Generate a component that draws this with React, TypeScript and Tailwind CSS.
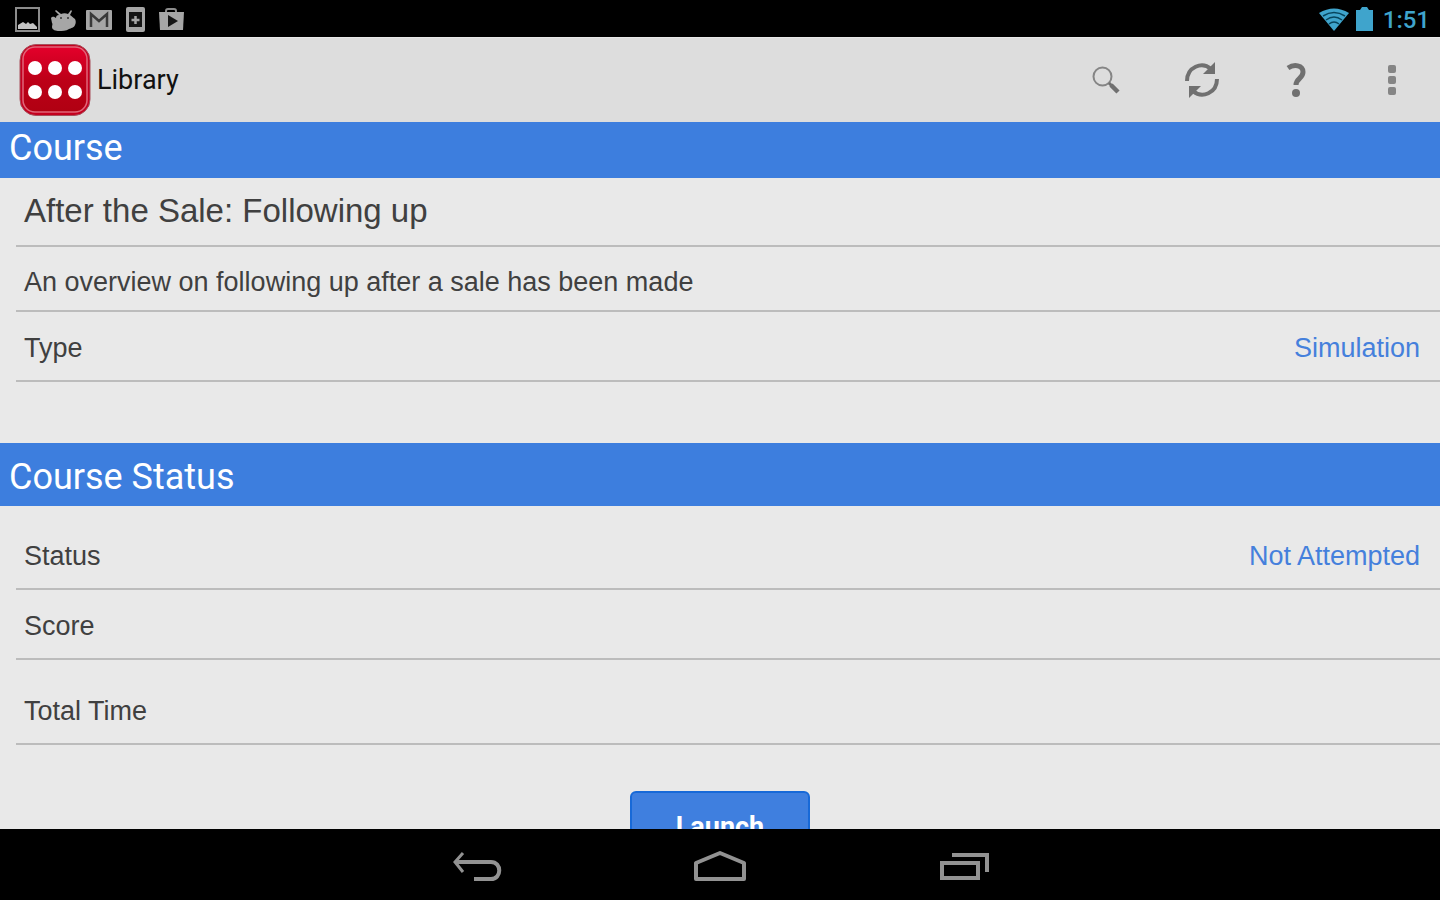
import type { ReactNode } from 'react';

function StatusBar() {
  return (
    <div className="flex h-[37px] shrink-0 items-center justify-between bg-black pl-[14px] pr-[10px] pt-[2px]">
      <div className="flex items-center gap-[10px] text-[#a6a6a6]">
        <svg width="26" height="26" viewBox="0 0 26 26" role="img" aria-label="Screenshot saved">
          <rect x="2" y="1" width="23" height="23" fill="none" stroke="#8c8c8c" strokeWidth="2" />
          <path d="M4 22v-4l5-3 3 2 2-2 2 2 3-1 4 4v2z" fill="#c4c4c4" />
        </svg>
        <svg width="26" height="26" viewBox="0 0 26 26" role="img" aria-label="Android">
          <path d="M1 11c2-2 3-1 5 0 0-2 1-3 3-3L5 4l1-1 5 4c2-1 5-1 7 0l3-4 1 1-2 4c2 1 3 3 5 4 1 2 1 4 0 6-1 3-4 3-6 4-3 2-7 2-10 2-3 0-7-1-7-4 0-2 1-3 0-4z" fill="currentColor" />
          <circle cx="11" cy="11" r="1" fill="#333" />
          <circle cx="18" cy="11" r="1" fill="#333" />
        </svg>
        <svg width="26" height="26" viewBox="0 0 26 26" role="img" aria-label="Mail">
          <rect x="0" y="3" width="26" height="20" rx="1" fill="currentColor" />
          <path d="M5 20V7l8 7 8-7v13" fill="none" stroke="#3a3a3a" strokeWidth="2.500" />
        </svg>
        <svg width="26" height="26" viewBox="0 0 26 26" role="img" aria-label="Device">
          <rect x="4" y="0" width="19" height="25" rx="2" fill="currentColor" />
          <rect x="7" y="5" width="13" height="15" fill="#151515" />
          <path d="M13.500 9v8M9.500 13h8" stroke="currentColor" strokeWidth="2.500" />
        </svg>
        <svg width="26" height="26" viewBox="0 0 26 26" role="img" aria-label="Play Store">
          <path d="M8 6V4q0-2 2-2h6q2 0 2 2v2" fill="none" stroke="#8c8c8c" strokeWidth="2" />
          <path d="M1 5h25l-1 18H2z" fill="currentColor" />
          <path d="M10 8l10 6-10 6z" fill="#151515" />
        </svg>
      </div>
      <div className="flex items-center text-[#3fa4cc]">
        <svg width="32" height="26" viewBox="0 0 32 26" role="img" aria-label="Wi-Fi">
          <path d="M1 6Q16-3 31 6L16 24z" fill="currentColor" />
          <path d="M5 9q11-7 22 0M8 13q8-6 16 0M11 17q5-4 10 0" fill="none" stroke="#07445c" strokeWidth="1.500" />
        </svg>
        <svg className="ml-[6px]" width="17" height="26" viewBox="0 0 17 26" role="img" aria-label="Battery">
          <path d="M0 3h4l2-3h5l2 3h4v21H0z" fill="currentColor" />
        </svg>
        <span className="ml-[10px] font-[Roboto,sans-serif] text-[24px] leading-8 font-medium">1:51</span>
      </div>
    </div>
  );
}

function AppBar() {
  return (
    <header className="flex h-[85px] shrink-0 items-center justify-between border-t border-[#e8e8e8] bg-[#dddddd] pl-[19px]">
      <div className="flex items-center gap-[6px]">
        <svg width="72" height="72" viewBox="0 0 72 72" aria-hidden="true">
          <defs>
            <linearGradient id="logoRed" x1="0" y1="0" x2="0" y2="1">
              <stop offset="0" stopColor="#e4002b" />
              <stop offset="0.5" stopColor="#bd0018" />
              <stop offset="1" stopColor="#b00012" />
            </linearGradient>
          </defs>
          <rect x="1" y="0.500" width="70" height="71" rx="16" fill="#c4001f" stroke="#a8505c" strokeWidth="1" />
          <rect x="4" y="3" width="64" height="65" rx="12" fill="url(#logoRed)" stroke="#e0667a" strokeWidth="1.500" />
          <g fill="#fff">
            <circle cx="16" cy="24" r="7" />
            <circle cx="36" cy="24" r="7" />
            <circle cx="56" cy="24" r="7" />
            <circle cx="16" cy="48" r="7" />
            <circle cx="36" cy="48" r="7" />
            <circle cx="56" cy="48" r="7" />
          </g>
        </svg>
        <h1 className="font-[Roboto,sans-serif] text-[27px] leading-8 text-[#111111]">Library</h1>
      </div>
      <div className="flex text-[#707070]">
        <button type="button" aria-label="Search" className="flex h-20 w-24 items-center justify-center">
          <svg width="28" height="28" viewBox="0 0 28 28" fill="none" stroke="currentColor" overflow="visible">
            <g transform="translate(2 0)">
              <circle cx="10.500" cy="10.500" r="9" strokeWidth="2" stroke="#858585" />
              <path d="M17 17l3 3" strokeWidth="3" />
              <path d="M19 19l7 7" strokeWidth="4.500" />
            </g>
          </svg>
        </button>
        <button type="button" aria-label="Refresh" className="flex h-20 w-24 items-center justify-center">
          <svg width="36" height="36" viewBox="0 0 36 36" fill="none" stroke="currentColor" strokeWidth="4" overflow="visible">
            <g transform="translate(2 0)">
              <path d="M3 19C3 5 18-1 27 7" />
              <path d="M33 17C33 31 18 37 9 29" />
              <path d="M31 0v12H19z" fill="currentColor" stroke="none" />
              <path d="M5 36V24h12z" fill="currentColor" stroke="none" />
            </g>
          </svg>
        </button>
        <button type="button" aria-label="Help" className="flex h-20 w-24 items-center justify-center">
          <svg width="20" height="34" viewBox="0 0 20 34" fill="none" stroke="currentColor" strokeWidth="5">
            <path d="M2 5c6-4 15-3 15 4 0 7-7 6-7 13" />
            <circle cx="10" cy="30" r="4" fill="currentColor" stroke="none" />
          </svg>
        </button>
        <button type="button" aria-label="More options" className="flex h-20 w-24 items-center justify-center">
          <svg width="8" height="32" viewBox="0 0 8 32" fill="#858585">
            <rect x="0" y="1" width="8" height="8" rx="2" />
            <rect x="0" y="12" width="8" height="8" rx="2" />
            <rect x="0" y="23" width="8" height="8" rx="2" />
          </svg>
        </button>
      </div>
    </header>
  );
}

function SectionTitle({ className, children }: { className: string; children: ReactNode }) {
  return (
    <h2 className={`flex shrink-0 items-center bg-[#3d7ede] px-[9px] font-[Roboto,sans-serif] text-[36px] leading-10 text-white ${className}`}>
      {children}
    </h2>
  );
}

function Row({ className, label, value }: { className: string; label: string; value?: string }) {
  return (
    <div className={`ml-4 flex shrink-0 items-end justify-between border-b-2 border-[#bcbcbc] pl-2 pr-5 text-[27px] leading-8 ${className}`}>
      <span>{label}</span>
      {value && <span className="text-[#4580dc]">{value}</span>}
    </div>
  );
}

function NavBar() {
  return (
    <nav className="flex h-[71px] shrink-0 items-center justify-center gap-[148px] bg-black pt-[3px] text-[#929292]">
      <button type="button" aria-label="Back" className="flex h-14 w-24 items-center justify-center">
        <svg width="50" height="32" viewBox="0 0 50 32" fill="none" stroke="currentColor" strokeWidth="4" overflow="visible">
          <g transform="translate(2 0)">
            <path d="M2 12h36c11 0 11 17 0 17H21" />
            <path d="M10 3L2 12l8 10" strokeWidth="3" />
          </g>
        </svg>
      </button>
      <button type="button" aria-label="Home" className="flex h-14 w-24 items-center justify-center">
        <svg width="54" height="32" viewBox="0 0 54 32" fill="none" stroke="currentColor" strokeWidth="4" strokeLinejoin="round">
          <path d="M3 29V13L27 3l24 10v16z" />
        </svg>
      </button>
      <button type="button" aria-label="Recent apps" className="flex h-14 w-24 items-center justify-center">
        <svg width="50" height="28" viewBox="0 0 50 28" fill="none" stroke="currentColor" strokeWidth="4" overflow="visible">
          <g transform="translate(1 0)">
            <path d="M2 11h36v15H2z" />
            <path d="M12 3h35v17" />
          </g>
        </svg>
      </button>
    </nav>
  );
}

export default function App() {
  return (
    <div className="flex h-screen flex-col bg-[#e9e9e9] font-['Liberation_Sans',Arial,sans-serif] text-[#404040]">
      <StatusBar />
      <AppBar />
      <main className="flex min-h-0 flex-1 flex-col overflow-hidden">
        <SectionTitle className="h-14 pb-1">Course</SectionTitle>
        <div className="ml-4 flex h-[69px] shrink-0 items-end border-b-2 border-[#bcbcbc] pb-[14px] pl-2 pr-5">
          <h3 className="text-[33px] leading-10">After the Sale: Following up</h3>
        </div>
        <Row className="h-[65px] pb-3" label="An overview on following up after a sale has been made" />
        <Row className="h-[70px] pb-4" label="Type" value="Simulation" />
        <SectionTitle className="mt-[61px] h-[63px] pt-1">Course Status</SectionTitle>
        <Row className="h-[84px] pb-4" label="Status" value="Not Attempted" />
        <Row className="h-[70px] pb-4" label="Score" />
        <Row className="h-[85px] pb-4" label="Total Time" />
        <button
          type="button"
          className="mx-auto mt-[46px] h-[72px] w-[180px] shrink-0 rounded-md border-2 border-[#1769d8] bg-[#3f7fdf] font-[Roboto,sans-serif] text-[27px] leading-8 font-bold text-white"
        >
          Launch
        </button>
      </main>
      <NavBar />
    </div>
  );
}
